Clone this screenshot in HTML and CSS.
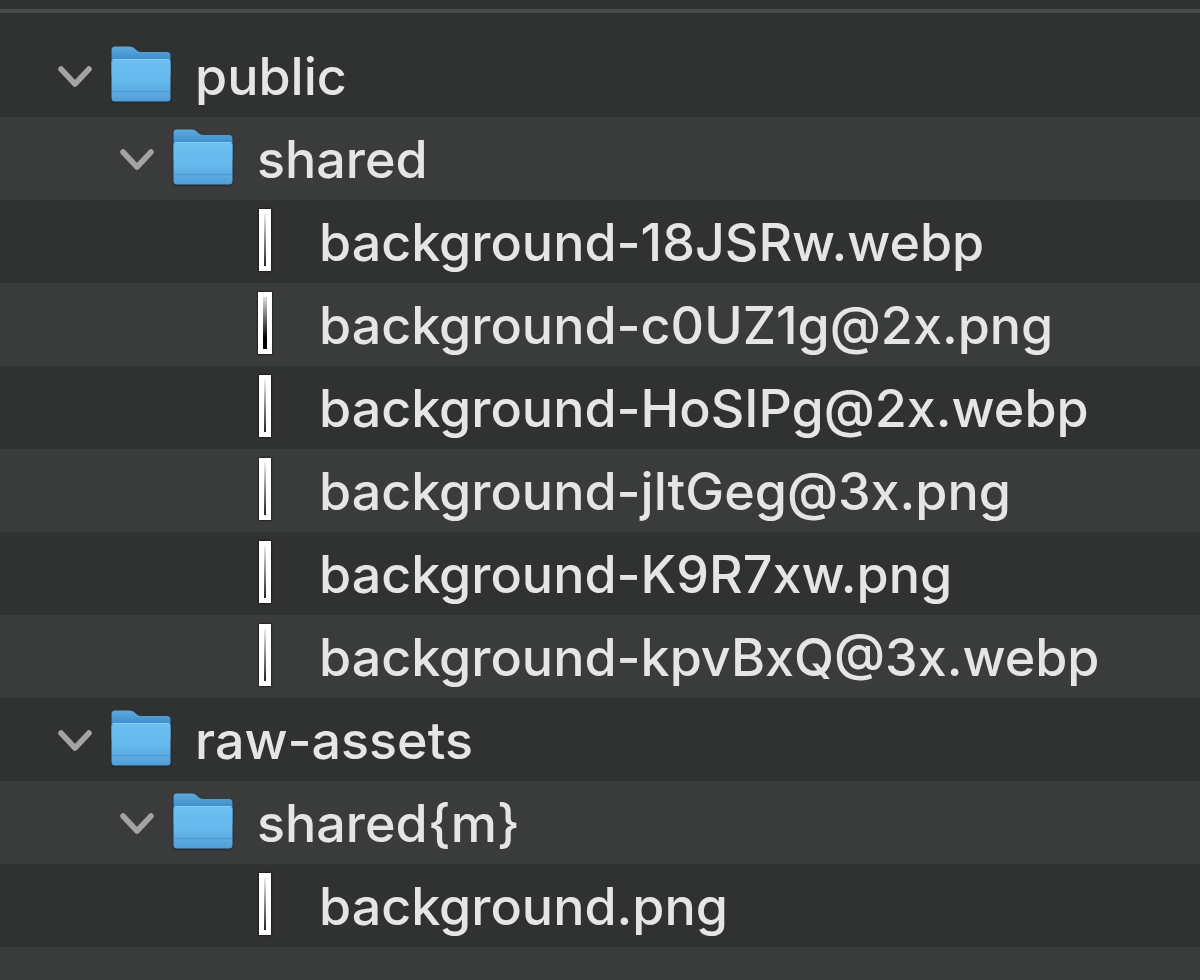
FILE: index.html
```html
<!DOCTYPE html>
<html lang="en">
<head>
    <meta charset="UTF-8">
    <meta name="viewport" content="width=device-width, initial-scale=1.0">
    <title>Files</title>
    <link rel="stylesheet" href="styles.css">
</head>
<body>
    <svg class="symbols" aria-hidden="true">
        <defs>
            <linearGradient id="folder-back" x1="0" y1="0" x2="0" y2="1">
                <stop offset="0" stop-color="#5dabe0"/>
                <stop offset="0.4" stop-color="#4191cb"/>
                <stop offset="1" stop-color="#4191cb"/>
            </linearGradient>
            <linearGradient id="folder-front" x1="0" y1="0" x2="0" y2="1">
                <stop offset="0" stop-color="#6cbfef"/>
                <stop offset="0.5" stop-color="#66b9ed"/>
                <stop offset="1" stop-color="#529fd8"/>
            </linearGradient>
            <linearGradient id="thumb-light" x1="0" y1="0" x2="0" y2="1">
                <stop offset="0" stop-color="#eeeeee"/>
                <stop offset="1" stop-color="#222222"/>
            </linearGradient>
            <linearGradient id="thumb-dark" x1="0" y1="0" x2="0" y2="1">
                <stop offset="0" stop-color="#dddddd"/>
                <stop offset="0.8" stop-color="#000000"/>
            </linearGradient>
        </defs>
        <symbol id="chevron" viewBox="0 0 36 24">
            <path d="M4 4L18 19L32 4" fill="none" stroke="#a3a3a3" stroke-width="5.500" stroke-linecap="round" stroke-linejoin="round"/>
        </symbol>
        <symbol id="folder" viewBox="0 0 60 56">
            <path d="M0.500 4Q0.500 0.500 4 0.500H19Q21.500 0.500 23 2L26 4.500Q28 6 30.500 6H56Q59.500 6 59.500 9.500V30H0.500Z" fill="url(#folder-back)"/>
            <path d="M0.500 16.500Q0.500 13 4 13H56Q59.500 13 59.500 16.500V52Q59.500 55.500 56 55.500H4Q0.500 55.500 0.500 52Z" fill="url(#folder-front)"/>
            <path d="M2 13.500H58" stroke="#86ccf5" stroke-width="1"/>
            <path d="M1 45.500H59" stroke="#4d9bd5" stroke-width="1"/>
        </symbol>
        <symbol id="thumb" viewBox="0 0 12 62">
            <path d="M0 0H12V62H0Z" fill="#ffffff"/>
            <path d="M5 5H7V57H5Z" fill="url(#thumb-light)"/>
        </symbol>
        <symbol id="thumb-wide" viewBox="0 0 14 62">
            <path d="M0 0H14V62H0Z" fill="#ffffff"/>
            <path d="M5 5H9V57H5Z" fill="url(#thumb-dark)"/>
        </symbol>
    </svg>

    <header class="header"></header>
    <ul class="tree">
        <li class="row">
            <button class="toggle" aria-label="Collapse public"><svg class="chevron"><use href="#chevron"/></svg></button>
            <span class="icon"><svg class="folder"><use href="#folder"/></svg></span>
            <span class="name">public</span>
        </li>
        <li class="row level-1">
            <button class="toggle" aria-label="Collapse shared"><svg class="chevron"><use href="#chevron"/></svg></button>
            <span class="icon"><svg class="folder"><use href="#folder"/></svg></span>
            <span class="name">shared</span>
        </li>
        <li class="row level-2">
            <span class="icon"><svg class="thumb"><use href="#thumb"/></svg></span>
            <span class="name">background-18JSRw.webp</span>
        </li>
        <li class="row level-2">
            <span class="icon"><svg class="thumb wide"><use href="#thumb-wide"/></svg></span>
            <span class="name">background-c0UZ1g@2x.png</span>
        </li>
        <li class="row level-2">
            <span class="icon"><svg class="thumb"><use href="#thumb"/></svg></span>
            <span class="name">background-HoSIPg@2x.webp</span>
        </li>
        <li class="row level-2">
            <span class="icon"><svg class="thumb"><use href="#thumb"/></svg></span>
            <span class="name">background-jltGeg@3x.png</span>
        </li>
        <li class="row level-2">
            <span class="icon"><svg class="thumb"><use href="#thumb"/></svg></span>
            <span class="name">background-K9R7xw.png</span>
        </li>
        <li class="row level-2">
            <span class="icon"><svg class="thumb"><use href="#thumb"/></svg></span>
            <span class="name">background-kpvBxQ@3x.webp</span>
        </li>
        <li class="row">
            <button class="toggle" aria-label="Collapse raw-assets"><svg class="chevron"><use href="#chevron"/></svg></button>
            <span class="icon"><svg class="folder"><use href="#folder"/></svg></span>
            <span class="name">raw-assets</span>
        </li>
        <li class="row level-1">
            <button class="toggle" aria-label="Collapse shared{m}"><svg class="chevron"><use href="#chevron"/></svg></button>
            <span class="icon"><svg class="folder"><use href="#folder"/></svg></span>
            <span class="name">shared{m}</span>
        </li>
        <li class="row level-2">
            <span class="icon"><svg class="thumb"><use href="#thumb"/></svg></span>
            <span class="name">background.png</span>
        </li>
    </ul>
</body>
</html>
```

FILE: styles.css
```css
body {
    font-family: Inter, "Liberation Sans", sans-serif;
    background-color: #3a3b3b;
    color: #e4e5e4;
    margin: 0;
}
.symbols {
    position: absolute;
    width: 0;
    height: 0;
}
.header {
    height: 9px;
    background-color: #303131;
    border-bottom: 4px solid #4b4c4c;
}
.tree {
    list-style: none;
    margin: 0;
    padding: 21px 0 0;
    background-color: #303131;
}
.row {
    display: flex;
    align-items: center;
    height: 83px;
    padding-left: 57px;
}
.row:nth-child(even) {
    background-color: #3a3b3b;
}
.level-1 {
    padding-left: 119px;
}
.level-2 {
    padding-left: 235px;
}
.toggle {
    width: 54px;
    padding: 2px 0 0;
    border: none;
    background: none;
    text-align: left;
    cursor: pointer;
}
.chevron {
    display: block;
    width: 36px;
    height: 24px;
}
.icon {
    display: flex;
    justify-content: center;
    width: 60px;
    margin-right: 24px;
    padding-bottom: 3px;
}
.folder {
    width: 60px;
    height: 56px;
    filter: drop-shadow(0 1px 1px #1b2630);
}
.thumb {
    width: 12px;
    height: 62px;
    filter: drop-shadow(0 0 1px #000000);
}
.thumb.wide {
    width: 14px;
}
.name {
    padding-top: 2px;
    font-size: 52px;
    font-weight: 500;
    line-height: 80px;
    white-space: nowrap;
}
```
